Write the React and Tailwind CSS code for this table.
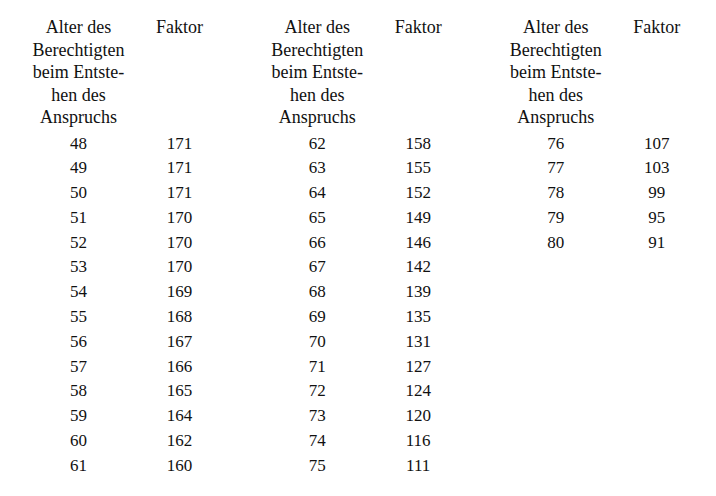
const blocks = [
  [
    [48, 171], [49, 171], [50, 171], [51, 170], [52, 170], [53, 170], [54, 169],
    [55, 168], [56, 167], [57, 166], [58, 165], [59, 164], [60, 162], [61, 160],
  ],
  [
    [62, 158], [63, 155], [64, 152], [65, 149], [66, 146], [67, 142], [68, 139],
    [69, 135], [70, 131], [71, 127], [72, 124], [73, 120], [74, 116], [75, 111],
  ],
  [[76, 107], [77, 103], [78, 99], [79, 95], [80, 91]],
]

function Block({ rows }) {
  return (
    <div className="pl-[20px]">
      {/* header */}
      <div className="flex text-[18px] leading-[22.5px]">
        <div className="w-[117px] text-center">
          Alter des
          <br />
          Berechtigten
          <br />
          beim Entste-
          <br />
          hen des
          <br />
          Anspruchs
        </div>
        <div className="w-[85px] text-center">Faktor</div>
      </div>

      {/* rows */}
      <div className="mt-[3px] flex flex-col">
        {rows.map(([age, factor]) => (
          <div key={age} className="flex h-[24.8px] leading-[24.8px]">
            <div className="w-[117px] text-center">{age}</div>
            <div className="w-[85px] text-center">{factor}</div>
          </div>
        ))}
      </div>
    </div>
  )
}

export default function App() {
  return (
    <div className="w-[716px] h-[496px] bg-white text-[#111] text-[17px] font-['Liberation_Serif',serif] pt-[16px] grid grid-cols-3 overflow-hidden">
      {blocks.map((rows, i) => (
        <Block key={i} rows={rows} />
      ))}
    </div>
  )
}
